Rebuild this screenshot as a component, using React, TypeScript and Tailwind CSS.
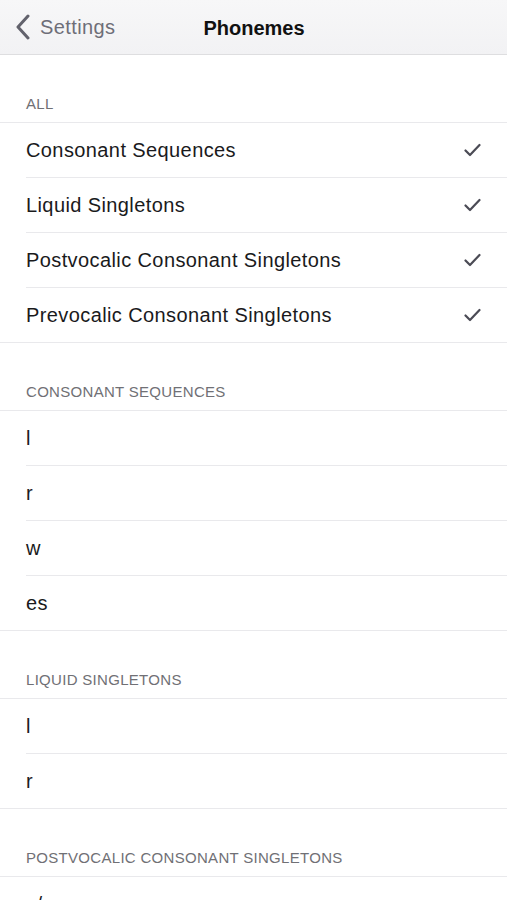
import React from "react";

const sections: { title: string; items: { label: string; checked?: boolean }[] }[] = [
  {
    title: "ALL",
    items: [
      { label: "Consonant Sequences", checked: true },
      { label: "Liquid Singletons", checked: true },
      { label: "Postvocalic Consonant Singletons", checked: true },
      { label: "Prevocalic Consonant Singletons", checked: true },
    ],
  },
  {
    title: "CONSONANT SEQUENCES",
    items: [{ label: "l" }, { label: "r" }, { label: "w" }, { label: "es" }],
  },
  {
    title: "LIQUID SINGLETONS",
    items: [{ label: "l" }, { label: "r" }],
  },
  {
    title: "POSTVOCALIC CONSONANT SINGLETONS",
    items: [{ label: "c/z" }, { label: "d" }],
  },
];

function Check() {
  return (
    <svg width="17" height="14" viewBox="0 0 17 14" fill="none">
      <path d="M1.5 7.5 L6 12 L15.5 2" stroke="#4b4b55" strokeWidth="2.2" strokeLinecap="round" strokeLinejoin="round" />
    </svg>
  );
}

export default function App() {
  return (
    <div
      className="w-[507px] h-[900px] overflow-hidden bg-white"
      style={{ fontFamily: '"Liberation Sans", Arial, sans-serif' }}
    >
      <div className="h-[55px] bg-gradient-to-b from-[#f7f7f8] to-[#f2f2f4] border-b border-[#dedee0] flex items-center relative">
        <div className="flex items-center pl-[15px] gap-[9px] text-[#6e6e78]">
          <svg width="16" height="26" viewBox="0 0 16 26" fill="none">
            <path d="M13 2 L3 13 L13 24" stroke="#62626c" strokeWidth="3" strokeLinecap="round" strokeLinejoin="round" />
          </svg>
          <span className="text-[20px] tracking-[0.4px]">Settings</span>
        </div>
        <div className="absolute left-0 right-0 top-0 h-[55px] flex items-center justify-center pointer-events-none">
          <span className="text-[20px] font-bold text-[#111] pl-[1px]">Phonemes</span>
        </div>
      </div>
      {sections.map((s) => (
        <div key={s.title}>
          <div className="h-[67px] flex items-end pb-[7px] pl-[26px] text-[15px] text-[#707075] tracking-[0.3px]">
            {s.title}
          </div>
          <div className="border-t border-[#e9e9ec]">
            {s.items.map((it, i) => {
              const last = i === s.items.length - 1;
              return (
                <div key={i} className={"pl-[26px] " + (last ? "border-b border-[#e9e9ec]" : "")}>
                  <div
                    className={
                      "flex items-center justify-between pr-[26px] " +
                      (last ? "h-[54px]" : "h-[55px] border-b border-[#e9e9ec]")
                    }
                  >
                    <span className="text-[20px] tracking-[0.4px] text-[#1a1a1c]">{it.label}</span>
                    {it.checked ? <Check /> : null}
                  </div>
                </div>
              );
            })}
          </div>
        </div>
      ))}
    </div>
  );
}
